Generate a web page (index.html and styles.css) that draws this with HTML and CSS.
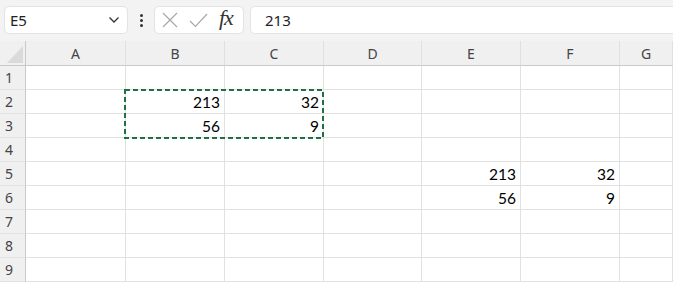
FILE: index.html
```html
<!DOCTYPE html>
<html lang="en">
<head>
    <meta charset="UTF-8">
    <title>Sheet</title>
    <link rel="stylesheet" href="styles.css">
</head>
<body>

    <div class="toolbar">
        <div class="name-box">
            <span>E5</span>
            <svg class="chevron" width="10" height="6" viewBox="0 0 10 6"><path d="M0.5 0.5 L5 5 L9.5 0.5" fill="none" stroke="#333" stroke-width="1.3"/></svg>
        </div>
        <div class="more">
            <i></i><i></i><i></i>
        </div>
        <div class="fx-box">
            <svg width="16" height="16" viewBox="0 0 16 16"><path d="M1 1 L15 15 M15 1 L1 15" stroke="#a8a8a8" stroke-width="1.2"/></svg>
            <svg width="19" height="15" viewBox="0 0 19 15"><path d="M1 8 L6.5 13.5 L18 1" fill="none" stroke="#a8a8a8" stroke-width="1.2"/></svg>
            <span class="fx">fx</span>
        </div>
        <div class="formula">213</div>
    </div>

    <div class="sheet">
        <div class="row head">
            <div class="cell rh corner"><b></b></div>
            <div class="cell">A</div><div class="cell">B</div><div class="cell">C</div><div class="cell">D</div>
            <div class="cell">E</div><div class="cell">F</div><div class="cell">G</div>
        </div>
        <div class="row"><div class="cell rh">1</div><div class="cell"></div><div class="cell"></div><div class="cell"></div><div class="cell"></div><div class="cell"></div><div class="cell"></div><div class="cell"></div></div>
        <div class="row"><div class="cell rh">2</div><div class="cell"></div><div class="cell">213</div><div class="cell">32</div><div class="cell"></div><div class="cell"></div><div class="cell"></div><div class="cell"></div></div>
        <div class="row"><div class="cell rh">3</div><div class="cell"></div><div class="cell">56</div><div class="cell">9</div><div class="cell"></div><div class="cell"></div><div class="cell"></div><div class="cell"></div></div>
        <div class="row"><div class="cell rh">4</div><div class="cell"></div><div class="cell"></div><div class="cell"></div><div class="cell"></div><div class="cell"></div><div class="cell"></div><div class="cell"></div></div>
        <div class="row"><div class="cell rh">5</div><div class="cell"></div><div class="cell"></div><div class="cell"></div><div class="cell"></div><div class="cell">213</div><div class="cell">32</div><div class="cell"></div></div>
        <div class="row"><div class="cell rh">6</div><div class="cell"></div><div class="cell"></div><div class="cell"></div><div class="cell"></div><div class="cell">56</div><div class="cell">9</div><div class="cell"></div></div>
        <div class="row"><div class="cell rh">7</div><div class="cell"></div><div class="cell"></div><div class="cell"></div><div class="cell"></div><div class="cell"></div><div class="cell"></div><div class="cell"></div></div>
        <div class="row"><div class="cell rh">8</div><div class="cell"></div><div class="cell"></div><div class="cell"></div><div class="cell"></div><div class="cell"></div><div class="cell"></div><div class="cell"></div></div>
        <div class="row"><div class="cell rh">9</div><div class="cell"></div><div class="cell"></div><div class="cell"></div><div class="cell"></div><div class="cell"></div><div class="cell"></div><div class="cell"></div></div>

        <!-- copy marquee round B2:C3 -->
        <svg class="marquee" width="200" height="50" viewBox="0 0 200 50">
            <rect x="1" y="1" width="198" height="48" fill="none" stroke="#1e7145" stroke-width="2" stroke-dasharray="5 3"/>
        </svg>
    </div>

</body>
</html>
```

FILE: styles.css
```css
body {
    margin: 0;
    background-color: #fff;
    font-family: 'Noto Sans', 'Open Sans', sans-serif;
    overflow: hidden;
}
.toolbar {
    display: flex;
    align-items: center;
    height: 41px;
    padding: 6px 0 7px 4px;
    box-sizing: border-box;
    background-color: #f3f3f3;
}
.name-box, .fx-box, .formula {
    height: 28px;
    box-sizing: border-box;
    background-color: #fff;
    border: 1px solid #e3e3e3;
    border-radius: 5px;
    display: flex;
    align-items: center;
}
.name-box {
    width: 124px;
    padding: 0 8px 0 5px;
    justify-content: space-between;
    font-size: 15px;
    color: #222;
}
.more {
    width: 26px;
    display: flex;
    flex-direction: column;
    align-items: center;
    gap: 2px;
}
.more>i {
    width: 3px;
    height: 3px;
    border-radius: 2px;
    background-color: #333;
}
.fx-box {
    width: 90px;
    padding: 0 5px 0 7px;
    gap: 11px;
}
.fx {
    font-family: 'Liberation Serif', serif;
    font-style: italic;
    font-size: 22px;
    color: #333;
    letter-spacing: -1px;
    margin-top: -4px;
}
.formula {
    flex: 1;
    margin-left: 6px;
    border-right: none;
    border-radius: 5px 0 0 5px;
    padding-left: 14px;
    font-size: 15px;
    color: #222;
}

.sheet {
    position: relative;
}
.row {
    display: grid;
    grid-template-columns: 26px 100px 99px 99px 98px 99px 99px 1fr;
    height: 24px;
}
.cell {
    border-right: 1px solid #e1e1e1;
    border-bottom: 1px solid #e1e1e1;
    font-family: 'Lato', sans-serif;
    font-size: 15.5px;
    color: #000;
    text-align: right;
    padding-right: 4px;
    line-height: 25px;
    overflow: hidden;
}
.rh {
    background-color: #f0f0f0;
    border-right: 1px solid #c9c9c9;
    border-bottom-color: #e2e2e2;
    font-family: 'Noto Sans', sans-serif;
    font-size: 14px;
    color: #444;
    text-align: left;
    padding: 0 0 0 5px;
    line-height: 23px;
}
.head {
    height: 25px;
}
.head>.cell {
    background-color: #f0f0f0;
    border-right-color: #e0e0e0;
    border-bottom: 1px solid #c9c9c9;
    font-family: 'Noto Sans', sans-serif;
    font-size: 14px;
    color: #444;
    text-align: center;
    padding: 0;
    line-height: 25px;
}
.head>.corner {
    border-right-color: #c9c9c9;
    position: relative;
}
.corner>b {
    position: absolute;
    left: 7px;
    top: 5px;
    width: 16px;
    height: 17px;
    background-color: #dadada;
    clip-path: polygon(100% 0, 100% 100%, 0 100%);
}
.marquee {
    position: absolute;
    left: 124px;
    top: 48px;
}
```
